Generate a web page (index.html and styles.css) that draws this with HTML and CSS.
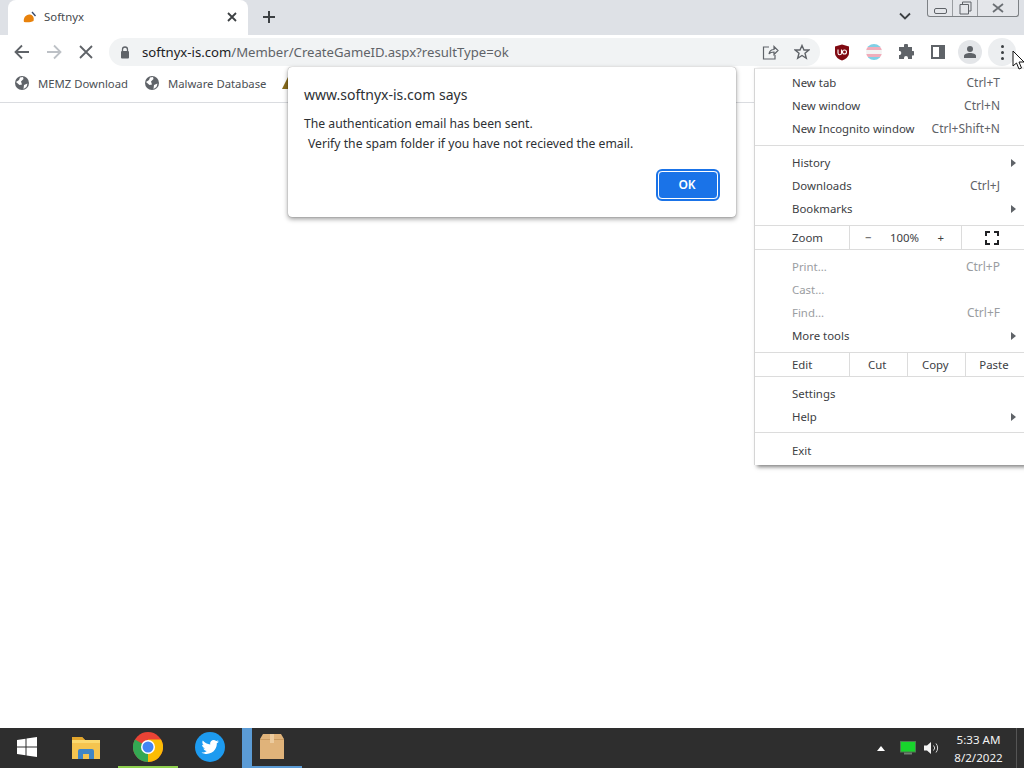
FILE: index.html
```html
<!DOCTYPE html>
<html lang="en">
<head>
    <meta charset="UTF-8">
    <meta name="viewport" content="width=device-width, initial-scale=1.0">
    <title>Softnyx</title>
    <link rel="stylesheet" href="styles.css">
</head>
<body>

<!-- Tab strip -->
<div class="tabstrip">
    <div class="tab">
        <svg class="favicon" width="14" height="12" viewBox="0 0 14 12"><path d="M1 11C0 7 3 3 7 3.500C10 3.800 11.500 7 10.500 10C8 11.500 4 11.500 1 11Z" fill="#e8820c"/><path d="M9 1L12.500 5" fill="none" stroke="#33476b" stroke-width="1.300"/></svg>
        <span class="tab-title">Softnyx</span>
        <svg class="tab-close" width="10" height="10" viewBox="0 0 10 10"><path d="M1 1L9 9M9 1L1 9" stroke="#3c4043" stroke-width="1.800"/></svg>
    </div>
    <svg class="new-tab" width="14" height="14" viewBox="0 0 14 14"><path d="M7 1V13M1 7H13" stroke="#3c4043" stroke-width="2"/></svg>
    <svg class="tab-search" width="12" height="8" viewBox="0 0 12 8"><path d="M1 1.500L6 6.500L11 1.500" fill="none" stroke="#3c4043" stroke-width="1.800"/></svg>
    <div class="caption">
        <div class="cap cap-min"><span class="min-glyph"></span></div>
        <div class="cap cap-max">
            <svg width="13" height="14" viewBox="0 0 13 14"><path d="M3.500 3V1H12V10H9.500M1 3.500H9.500V13H1Z" fill="#e4e6ea" stroke="#5f6368"/></svg>
        </div>
        <div class="cap cap-close">
            <svg width="12" height="10" viewBox="0 0 12 10"><path d="M1 1L11 9M11 1L1 9" stroke="#6b6f74" stroke-width="1.800"/></svg>
        </div>
    </div>
</div>

<!-- Toolbar -->
<div class="toolbar">
    <div class="tool"><svg width="16" height="16" viewBox="0 0 16 16"><path d="M15 8H2M8 1.500L1.500 8L8 14.500" fill="none" stroke="#5f6368" stroke-width="1.800"/></svg></div>
    <div class="tool"><svg width="16" height="16" viewBox="0 0 16 16"><path d="M1 8H14M8 1.500L14.500 8L8 14.500" fill="none" stroke="#bdc1c6" stroke-width="1.800"/></svg></div>
    <div class="tool"><svg width="14" height="14" viewBox="0 0 14 14"><path d="M1 1L13 13M13 1L1 13" stroke="#5f6368" stroke-width="1.800"/></svg></div>
    <div class="omnibox">
        <svg class="lock" width="10" height="13" viewBox="0 0 10 13"><path d="M2.500 5V3.500A2.500 2.500 0 0 1 7.500 3.500V5" fill="none" stroke="#5f6368" stroke-width="1.300"/><rect x="1" y="5" width="8" height="7.500" rx="1" fill="#5f6368"/></svg>
        <span class="url"><span class="url-host">softnyx-is.com</span>/Member/CreateGameID.aspx?resultType=ok</span>
        <div class="tool"><svg width="17" height="16" viewBox="0 0 17 16"><path d="M7 3H1.500V15H13V11M7 10C7.500 7 10 5.500 12 5.500V2.500L16 6.500L12 10.500V8C10 8 8 8.500 7 10Z" fill="none" stroke="#5f6368" stroke-width="1.200"/></svg></div>
        <div class="tool"><svg width="16" height="16" viewBox="0 0 16 16"><path d="M8 1.500L10 6H14.800L11 9.200L12.300 14.300L8 11.500L3.700 14.300L5 9.200L1.200 6H6Z" fill="none" stroke="#5f6368" stroke-width="1.400"/></svg></div>
    </div>
    <div class="tool"><svg width="16" height="17" viewBox="0 0 16 17"><path d="M8 .5L15 2.500V9C15 13 11 15.500 8 16.500C5 15.500 1 13 1 9V2.500Z" fill="#800a12"/><path d="M4 5.500V9A1.700 1.700 0 0 0 7.500 9V5.500" fill="none" stroke="#fff" stroke-width="1.100"/><circle cx="10.500" cy="8" r="2" fill="none" stroke="#fff" stroke-width="1.100"/></svg></div>
    <div class="tool"><div class="flag"><span class="flag-blue"></span><span class="flag-pink"></span><span class="flag-white"></span><span class="flag-pink"></span><span class="flag-blue"></span></div></div>
    <div class="tool"><svg width="16" height="16" viewBox="0 0 16 16"><path d="M6 1.500A2 2 0 0 1 10 1.500V3H14V7H15A2.200 2.200 0 0 1 15 11.500H14V15H10V14A2 2 0 0 0 6 14V15H1V11H2A2.200 2.200 0 0 0 2 7H1V3H6Z" fill="#5f6368"/></svg></div>
    <div class="tool"><svg width="14" height="14" viewBox="0 0 14 14"><rect x="1" y="1" width="12" height="12" fill="none" stroke="#5f6368" stroke-width="2"/><rect x="8" y="1" width="5" height="12" fill="#5f6368"/></svg></div>
    <div class="tool"><div class="avatar"><svg width="14" height="14" viewBox="0 0 14 14"><circle cx="7" cy="4" r="3" fill="#5f6368"/><path d="M1 13V11C1 9 4 8 7 8S13 9 13 11V13Z" fill="#5f6368"/></svg></div></div>
    <div class="tool"><div class="kebab-bg"><span class="dot"></span><span class="dot"></span><span class="dot"></span></div></div>
</div>

<!-- Bookmarks -->
<div class="bookmarks">
    <div class="bookmark">
        <svg width="14" height="14" viewBox="0 0 14 14"><circle cx="7" cy="7" r="7" fill="#5f6368"/><path d="M1 6L4 4L5 1.500L8 1L8.500 3L6 5.500L7 8.500L4.500 9ZM9 9L12.500 7.500L11.500 11L8.500 13Z" fill="#fff"/></svg>
        <span>MEMZ Download</span>
    </div>
    <div class="bookmark">
        <svg width="14" height="14" viewBox="0 0 14 14"><circle cx="7" cy="7" r="7" fill="#5f6368"/><path d="M1 6L4 4L5 1.500L8 1L8.500 3L6 5.500L7 8.500L4.500 9ZM9 9L12.500 7.500L11.500 11L8.500 13Z" fill="#fff"/></svg>
        <span>Malware Database</span>
    </div>
    <svg class="bookmark-cut" width="14" height="14" viewBox="0 0 14 14"><path d="M7 1L13 13H1Z" fill="#8a6d1d"/></svg>
</div>

<div class="page"></div>

<!-- Taskbar -->
<div class="taskbar">
    <div class="task task-start">
        <svg width="20" height="20" viewBox="0 0 20 20"><path d="M0 3L8.500 1.800V9.500H0ZM9.500 1.600L20 0V9.500H9.500ZM0 10.500H8.500V18.200L0 17ZM9.500 10.500H20V20L9.500 18.400Z" fill="#fff"/></svg>
    </div>
    <div class="task">
        <svg width="30" height="26" viewBox="0 0 30 26"><path d="M1 3H11L14 6H29V25H1Z" fill="#f5c44f"/><path d="M1 3H11L14 6H1Z" fill="#e2a52c"/><path d="M1 6H29V9H1Z" fill="#fbd96f"/><path d="M7 25V17A2 2 0 0 1 9 15H21A2 2 0 0 1 23 17V25H18V20H12V25Z" fill="#3f85c6"/></svg>
    </div>
    <div class="task task-chrome">
        <svg width="30" height="30" viewBox="0 0 30 30"><circle cx="15" cy="15" r="15" fill="#ea4335"/><path d="M15 15L2 7.500A15 15 0 0 0 15 30L22.500 17Z" fill="#34a853"/><path d="M15 15L15 30A15 15 0 0 0 28 7.500H15Z" fill="#fbbc05"/><circle cx="15" cy="15" r="7" fill="#fff"/><circle cx="15" cy="15" r="5.500" fill="#4285f4"/></svg>
    </div>
    <div class="task">
        <svg width="30" height="30" viewBox="0 0 30 30"><circle cx="15" cy="15" r="15" fill="#1d9bf0"/><path d="M24 9.500C23.300 9.800 22.600 10 21.900 10.100C22.600 9.600 23.200 9 23.400 8.200C22.700 8.600 21.900 8.900 21.100 9.100C19.700 7.600 17.300 7.800 16 9.300C15.200 10.200 15 11.400 15.300 12.400C12.300 12.300 9.600 10.900 7.800 8.600C6.900 10.200 7.300 12.200 8.800 13.300C8.200 13.300 7.600 13.100 7.100 12.800C7.100 14.500 8.300 16 10 16.300C9.500 16.500 8.900 16.500 8.400 16.400C8.900 17.800 10.200 18.800 11.700 18.900C10.200 20 8.300 20.600 6.500 20.400C11 23.200 17 21.900 20 17.500C21.300 15.600 21.900 13.500 21.800 11.300C22.700 10.900 23.400 10.200 24 9.500Z" fill="#fff"/></svg>
    </div>
    <div class="task task-active">
        <svg width="24" height="26" viewBox="0 0 24 26"><path d="M3 0H21L24 5V25H0V5Z" fill="#e0b37a"/><path d="M0 5H24V6H0Z" fill="#c99a60"/><path d="M10 0H14V9H10Z" fill="#eccb9e"/></svg>
    </div>
    <div class="tray">
        <svg class="tray-arrow" width="8" height="5" viewBox="0 0 8 5"><path d="M0 5L4 0L8 5Z" fill="#fff"/></svg>
        <svg class="tray-net" width="16" height="14" viewBox="0 0 16 14"><rect x=".5" y=".5" width="15" height="10.500" fill="#18d42c" stroke="#4d7a50"/><rect x="4" y="11.500" width="8" height="2" fill="#6f7f70"/></svg>
        <svg class="tray-sound" width="16" height="14" viewBox="0 0 16 14"><path d="M0 4.500H3L7 1V13L3 9.500H0Z" fill="#f4f4f4"/><path d="M9.500 4.500A3.500 3.500 0 0 1 9.500 9.500M12 2.500A7 7 0 0 1 12 11.500" fill="none" stroke="#d8d8d8"/></svg>
        <div class="clock"><span>5:33 AM</span><span>8/2/2022</span></div>
        <div class="show-desktop"></div>
    </div>
</div>

<!-- JS alert -->
<div class="dialog">
    <div class="dialog-title">www.softnyx-is.com says</div>
    <p class="dialog-msg">The authentication email has been sent.</p>
    <p class="dialog-msg dialog-msg-2">Verify the spam folder if you have not recieved the email.</p>
    <div class="dialog-actions"><button class="ok-button">OK</button></div>
</div>

<!-- Chrome menu -->
<div class="menu">
    <div class="menu-group">
        <div class="menu-row"><span>New tab</span><span class="shortcut">Ctrl+T</span></div>
        <div class="menu-row"><span>New window</span><span class="shortcut">Ctrl+N</span></div>
        <div class="menu-row"><span>New Incognito window</span><span class="shortcut">Ctrl+Shift+N</span></div>
    </div>
    <div class="menu-group menu-group-tail">
        <div class="menu-row"><span>History</span><span class="arrow"></span></div>
        <div class="menu-row"><span>Downloads</span><span class="shortcut">Ctrl+J</span></div>
        <div class="menu-row"><span>Bookmarks</span><span class="arrow"></span></div>
    </div>
    <div class="menu-split split-zoom">
        <div class="split-label">Zoom</div>
        <div class="zoom-controls"><span>−</span><span>100%</span><span>+</span></div>
        <div class="zoom-full"><svg width="14" height="14" viewBox="0 0 14 14"><path d="M1 5V1H5M9 1H13V5M13 9V13H9M5 13H1V9" fill="none" stroke="#202124" stroke-width="2"/></svg></div>
    </div>
    <div class="menu-group menu-group-plain">
        <div class="menu-row disabled"><span>Print...</span><span class="shortcut">Ctrl+P</span></div>
        <div class="menu-row disabled"><span>Cast...</span></div>
        <div class="menu-row disabled"><span>Find...</span><span class="shortcut">Ctrl+F</span></div>
        <div class="menu-row"><span>More tools</span><span class="arrow"></span></div>
    </div>
    <div class="menu-split split-edit">
        <div class="split-label">Edit</div>
        <div class="edit-cell">Cut</div>
        <div class="edit-cell">Copy</div>
        <div class="edit-cell">Paste</div>
    </div>
    <div class="menu-group menu-group-plain menu-group-help">
        <div class="menu-row"><span>Settings</span></div>
        <div class="menu-row"><span>Help</span><span class="arrow"></span></div>
    </div>
    <div class="menu-group menu-group-exit">
        <div class="menu-row"><span>Exit</span></div>
    </div>
</div>

<!-- Mouse pointer -->
<svg class="cursor" width="13" height="20" viewBox="0 0 13 20"><path d="M1 1V16L4.500 13L7 19L9.500 18L7 12H12Z" fill="#fff" stroke="#111"/></svg>

</body>
</html>
```

FILE: styles.css
```css
/* General */
* {
    margin: 0;
    padding: 0;
    box-sizing: border-box;
}
body {
    font-family: "Noto Sans", Arial, sans-serif;
    font-size: 12px;
    color: #202124;
    display: flex;
    flex-direction: column;
    width: 1024px;
    height: 768px;
    overflow: hidden;
    background-color: #fff;
}

/* Tabs */
.tabstrip {
    height: 35px;
    display: flex;
    align-items: center;
    background-color: #dee1e6;
    flex-shrink: 0;
}
.tab {
    width: 240px;
    height: 35px;
    margin-left: 8px;
    padding: 0 11px 2px 15px;
    display: flex;
    align-items: center;
    background-color: #fff;
    border-radius: 8px 8px 0 0;
}
.tab-title {
    flex-grow: 1;
    margin-left: 7px;
    font-size: 11.400px;
    color: #45494d;
}
.new-tab {
    margin: 0 0 2px 14px;
}
.tab-search {
    margin: 0 0 3px 623px;
}
.caption {
    position: absolute;
    top: 0;
    left: 927px;
    width: 92px;
    height: 17px;
    display: flex;
    border: 1px solid #7d8185;
    border-top: none;
    border-radius: 0 0 3px 3px;
    background-color: #e4e6ea;
}
.cap {
    display: flex;
    align-items: center;
    justify-content: center;
}
.cap-min {
    width: 25px;
    border-right: 1px solid #9a9da1;
}
.min-glyph {
    width: 13px;
    height: 6px;
    margin-top: 5px;
    border: 1px solid #5f6368;
    border-radius: 2px;
}
.cap-max {
    width: 25px;
    border-right: 1px solid #9a9da1;
}
.cap-close {
    flex-grow: 1;
}

/* Toolbar */
.toolbar {
    height: 34px;
    padding: 0 6px;
    display: flex;
    align-items: center;
    background-color: #fff;
    flex-shrink: 0;
}
.tool {
    width: 32px;
    height: 32px;
    display: flex;
    align-items: center;
    justify-content: center;
    flex-shrink: 0;
}
.omnibox {
    flex-grow: 1;
    height: 28px;
    margin: 0 6px 0 7px;
    padding: 0 2px 0 11px;
    display: flex;
    align-items: center;
    background-color: #f1f3f4;
    border-radius: 14px;
}
.lock {
    flex-shrink: 0;
}
.url {
    flex-grow: 1;
    margin-left: 12px;
    font-size: 13.150px;
    color: #5f6368;
}
.url-host {
    color: #202124;
}
.flag {
    width: 16px;
    height: 16px;
    display: flex;
    flex-direction: column;
    border-radius: 50%;
    overflow: hidden;
}
.flag span {
    flex-grow: 1;
}
.flag-blue {
    background-color: #7fd0e6;
}
.flag-pink {
    background-color: #f0adbb;
}
.flag-white {
    background-color: #f4f4f4;
}
.avatar {
    width: 24px;
    height: 24px;
    display: flex;
    align-items: center;
    justify-content: center;
    background-color: #e4e6e9;
    border-radius: 50%;
}
.kebab-bg {
    width: 28px;
    height: 28px;
    display: flex;
    flex-direction: column;
    align-items: center;
    justify-content: center;
    gap: 3px;
    background-color: #eceef0;
    border-radius: 50%;
}
.dot {
    width: 3px;
    height: 3px;
    background-color: #3c4043;
    border-radius: 50%;
}

/* Bookmarks */
.bookmarks {
    height: 34px;
    padding: 0 0 5px 15px;
    display: flex;
    align-items: center;
    font-size: 11.300px;
    color: #4b4f54;
    background-color: #fff;
    border-bottom: 1px solid #dadce0;
    flex-shrink: 0;
}
.bookmark {
    display: flex;
    align-items: center;
    gap: 9px;
    margin-right: 17px;
    flex-shrink: 0;
}
.bookmark-cut {
    margin-left: -2px;
    flex-shrink: 0;
}
.page {
    flex-grow: 1;
    background-color: #fff;
}

/* Dialog */
.dialog {
    position: absolute;
    top: 67px;
    left: 288px;
    width: 448px;
    height: 150px;
    padding: 18px 16px 0;
    background-color: #fff;
    border-radius: 4px;
    box-shadow: 0 0 1px rgba(0, 0, 0, 0.5), 0 2px 5px rgba(0, 0, 0, 0.4);
}
.dialog-title {
    font-size: 14px;
    line-height: 20px;
    color: #2d3034;
    margin-bottom: 9px;
}
.dialog-msg {
    font-size: 12.200px;
    line-height: 20px;
    color: #2d3034;
}
.dialog-msg-2 {
    margin-left: 4px;
}
.dialog-actions {
    display: flex;
    justify-content: flex-end;
    margin-top: 15px;
}
.ok-button {
    width: 60px;
    height: 28px;
    margin: 2px;
    padding: 0 2px 2px 0;
    font-family: inherit;
    font-size: 12px;
    font-weight: 600;
    color: #fff;
    background-color: #1a73e8;
    border: 1px solid #fff;
    border-radius: 4px;
    outline: 2px solid #1a73e8;
}

/* Chrome menu */
.menu {
    position: absolute;
    top: 68px;
    left: 754px;
    width: 270px;
    height: 397px;
    padding-top: 2px;
    font-size: 11.400px;
    background-color: #fff;
    border-left: 1px solid #d5d5d5;
    border-top: 1px solid #e8e8e8;
    box-shadow: 3px 2px 4px rgba(0, 0, 0, 0.5);
}
.menu-group {
    padding-bottom: 5px;
    margin-bottom: 5px;
    border-bottom: 1px solid #dcdcdc;
}
.menu-group-tail {
    margin-bottom: 0;
}
.menu-group-plain {
    border-bottom: none;
    margin-bottom: 0;
    padding-bottom: 0;
}
.menu-group-help {
    padding: 5px 0 4px;
    margin-bottom: 6px;
    border-bottom: 1px solid #dcdcdc;
}
.menu-group-exit {
    border-bottom: none;
}
.menu-row {
    height: 23px;
    padding: 0 24px 0 37px;
    display: flex;
    align-items: center;
    justify-content: space-between;
    position: relative;
    color: #3c4043;
}
.shortcut {
    font-size: 12px;
    color: #5f6368;
}
.disabled, .disabled .shortcut {
    color: #9a9da1;
}
.arrow {
    position: absolute;
    right: 8px;
    top: 8px;
    border-left: 5px solid #5f6368;
    border-top: 4px solid transparent;
    border-bottom: 4px solid transparent;
}
.menu-split {
    height: 24px;
    display: flex;
    align-items: center;
    border-bottom: 1px solid #dcdcdc;
    color: #3c4043;
}
.split-zoom {
    margin-bottom: 5px;
}
.split-edit {
    margin-top: 5px;
    border-top: 1px solid #dcdcdc;
    height: 25px;
}
.split-label {
    width: 95px;
    height: 100%;
    padding-left: 37px;
    display: flex;
    align-items: center;
    border-right: 1px solid #dcdcdc;
}
.zoom-controls {
    width: 112px;
    height: 100%;
    padding: 0 17px 0 15px;
    display: flex;
    align-items: center;
    justify-content: space-between;
    border-right: 1px solid #dcdcdc;
}
.zoom-full {
    flex-grow: 1;
    padding-right: 2px;
    display: flex;
    justify-content: center;
}
.edit-cell {
    width: 58.500px;
    height: 100%;
    padding-right: 2px;
    display: flex;
    align-items: center;
    justify-content: center;
    border-right: 1px solid #dcdcdc;
}
.edit-cell:last-child {
    border-right: none;
}

.cursor {
    position: absolute;
    top: 50px;
    left: 1012px;
}

/* Taskbar */
.taskbar {
    height: 40px;
    display: flex;
    align-items: center;
    background-color: #2e2e2e;
    flex-shrink: 0;
}
.task {
    width: 60px;
    height: 40px;
    margin-right: 2px;
    display: flex;
    align-items: center;
    justify-content: center;
    border-bottom: 2px solid transparent;
    flex-shrink: 0;
}
.task-start {
    width: 54px;
}
.task-chrome {
    border-bottom-color: #8fd14f;
}
.task-active {
    border-bottom-color: #5b9bd5;
    background: linear-gradient(to right, #5b9bd5 10px, transparent 10px);
}
.tray {
    flex-grow: 1;
    height: 100%;
    display: flex;
    align-items: center;
    color: #f2f2f2;
}
.tray-arrow {
    margin-left: 573px;
}
.tray-net {
    margin-left: 15px;
}
.tray-sound {
    margin-left: 8px;
}
.clock {
    margin-left: 7px;
    padding-top: 1px;
    width: 63px;
    display: flex;
    flex-direction: column;
    align-items: center;
    font-size: 11.600px;
    line-height: 18px;
}
.show-desktop {
    width: 1px;
    height: 100%;
    margin-left: 6px;
    background-color: #555;
}
```
